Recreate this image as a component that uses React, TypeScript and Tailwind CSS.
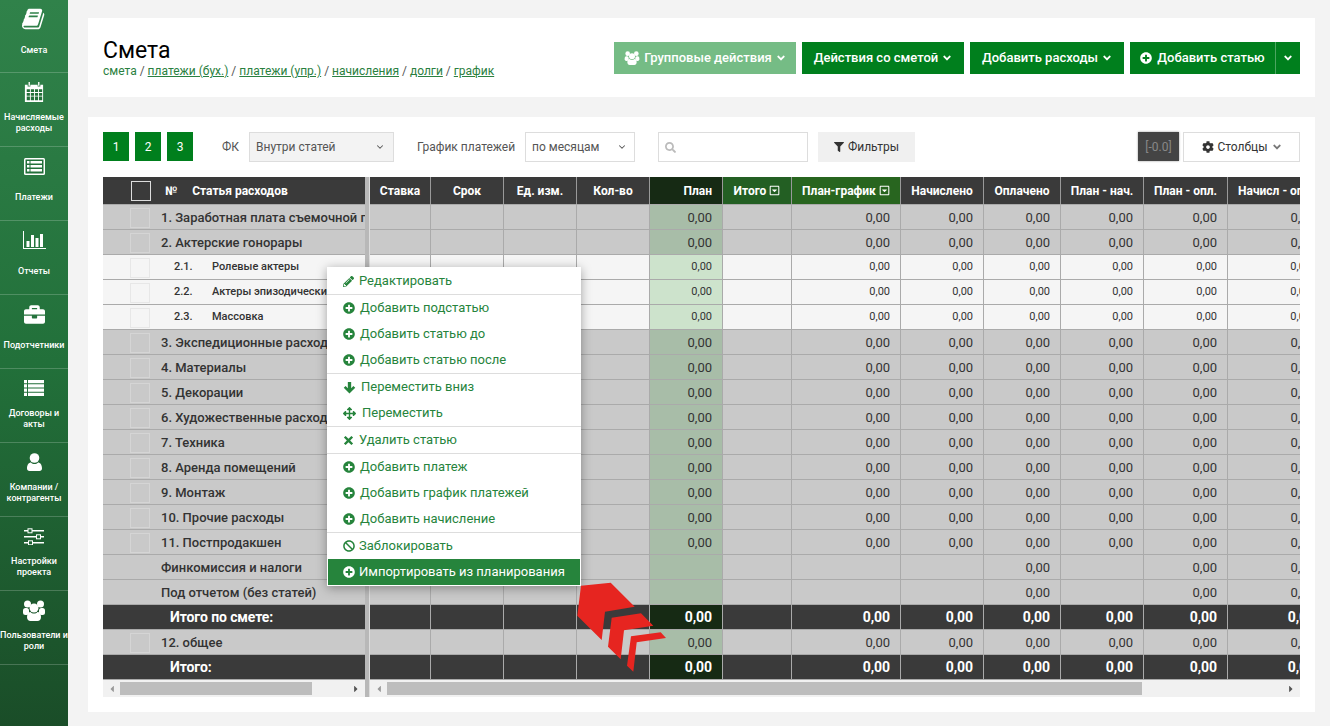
import { ChevronDown } from "lucide-react";
import {
  FaAngleDown,
  FaArrowsAlt,
  FaBan,
  FaBriefcase,
  FaCaretLeft,
  FaCaretRight,
  FaCog,
  FaFilter,
  FaPencilAlt,
  FaPlusCircle,
  FaRegCaretSquareDown,
  FaSearch,
} from "react-icons/fa";

const BookIcon = () => (
  <svg viewBox="0 0 1792 1792" className="h-[24px] w-[24px] fill-white">
    <path d="M1639 478q40 57 18 129l-275 906q-19 64-76.5 107.5t-122.5 43.5h-923q-77 0-148.5-53.5t-99.5-131.5q-24-67-2-127 0-4 3-27t4-37q1-8-3-21.5t-3-19.5q2-11 8-21t16.5-23.5 16.5-23.5q23-38 45-91.5t30-91.5q3-10 .5-30t-.5-28q3-11 17-28t17-23q21-36 42-92t25-90q1-9-2.5-32t.5-28q4-13 22-30.5t22-22.5q19-26 42.5-84.5t27.5-96.5q1-8-3-25.5t-2-26.5q2-8 9-18t18-23 17-21q8-12 16.5-30.5t15-35 16-36 19.5-32 26.5-23.5 36-11.5 47.5 5.5l-1 3q38-9 51-9h761q74 0 114 56t18 130l-274 906q-36 119-71.5 153.5t-128.5 34.5h-869q-27 0-38 15-11 16-1 43 24 70 144 70h923q29 0 56-15.5t35-41.5l300-987q7-22 5-57 38 15 59 43zm-1064 2q-4 13 2 22.5t20 9.5h608q13 0 25.5-9.5t16.5-22.5l21-64q4-13-2-22.5t-20-9.5h-608q-13 0-25.5 9.5t-16.5 22.5zm-83 256q-4 13 2 22.5t20 9.5h608q13 0 25.5-9.5t16.5-22.5l21-64q4-13-2-22.5t-20-9.5h-608q-13 0-25.5 9.5t-16.5 22.5z" />
  </svg>
);

const CalendarIcon = () => (
  <svg viewBox="0 0 22 24" className="h-[22px] w-[20px]">
    <path fill="#fff" d="M1 4h3v2h3V4h8v2h3V4h3v19H1z" />
    <path fill="#fff" d="M5 1h1.500v4H5zM15.500 1H17v4h-1.500z" />
    <g fill="#24713a">
      <path d="M3 9h3.500v3H3zM7.500 9H11v3H7.500zM12 9h3.500v3H12zM16.500 9H20v3h-3.500z" />
      <path d="M3 13h3.500v3H3zM7.500 13H11v3H7.500zM12 13h3.500v3H12zM16.500 13H20v3h-3.500z" />
      <path d="M3 17h3.500v4H3zM7.500 17H11v4H7.500zM12 17h3.500v4H12zM16.500 17H20v4h-3.500z" />
    </g>
  </svg>
);

const ListAltIcon = () => (
  <svg viewBox="0 0 21 17" className="h-[17px] w-[21px]">
    <rect width="21" height="17" rx="1.500" fill="#fff" />
    <rect x="1.500" y="1.500" width="18" height="14" fill="#22703a" />
    <path fill="#fff" d="M3 3h2.500v2.500H3zM6.500 3H18v2.500H6.500zM3 7h2.500v2.500H3zM6.500 7H18v2.500H6.500zM3 11h2.500v2.500H3zM6.500 11H18v2.500H6.500z" />
  </svg>
);

const ChartIcon = () => (
  <svg viewBox="0 0 23 18" className="h-[18px] w-[23px] fill-white">
    <path d="M0 0h1v17h22v1H0z" />
    <path d="M3.500 10h3v6h-3zM8 4h3v12H8zM12.500 7h3v9h-3zM17 3h3v13h-3z" />
  </svg>
);

const RowsIcon = () => (
  <svg viewBox="0 0 20 16" className="h-[16px] w-[20px] fill-white">
    <path d="M0 0h3v3.200H0zM4 0h16v3.200H4zM0 4.300h3v3.200H0zM4 4.300h16v3.200H4zM0 8.600h3v3.200H0zM4 8.600h16v3.200H4zM0 12.800h3V16H0zM4 12.800h16V16H4z" />
  </svg>
);

const UserIcon = () => (
  <svg viewBox="0 0 15 18" className="h-[18px] w-[15px] fill-white">
    <circle cx="7.500" cy="5" r="4.800" />
    <path d="M0 15.500C0 11.500 2 9.500 4 9.500c1 1 2 1.500 3.500 1.500s2.500-.5 3.500-1.500c2 0 4 2 4 6 0 1.500-1 2.500-2.500 2.500h-10C1 18 0 17 0 15.500z" />
  </svg>
);

const SlidersIcon = () => (
  <svg viewBox="0 0 20 17" className="h-[17px] w-[20px]">
    <path fill="#fff" d="M0 2h20v1.600H0zM0 8h20v1.600H0zM0 14h20v1.600H0z" />
    <g fill="#1f6534" stroke="#fff" strokeWidth="1">
      <rect x="4" y="0.800" width="4" height="4" />
      <rect x="12.500" y="6.800" width="4" height="4" />
      <rect x="4.500" y="12.800" width="4" height="4" />
    </g>
  </svg>
);

const UsersIcon = ({ className }: { className: string }) => (
  <svg viewBox="0 0 22 21" className={`fill-current ${className}`}>
    <circle cx="4.500" cy="4" r="3.500" />
    <circle cx="17.500" cy="4" r="3.500" />
    <circle cx="11" cy="8" r="4.500" />
    <rect x="0" y="8" width="6" height="7" rx="2.500" />
    <rect x="16" y="8" width="6" height="7" rx="2.500" />
    <path d="M4 17c0-3.500 2-5 3.500-5 1 1 2 1.500 3.500 1.500s2.500-.5 3.500-1.500c1.500 0 3.500 1.500 3.500 5 0 2.500-1.500 4-3.500 4h-7C5.500 21 4 19.500 4 17z" />
  </svg>
);

// the thin arrow and cross from the icon pack look too light next to the reference
const ArrowDownIcon = () => (
  <svg viewBox="0 0 14 14" className="h-[13px] w-[13px] fill-current">
    <path d="M7 13.500.8 7.300l2-2 2.400 2.400V1h3.600v6.700l2.400-2.400 2 2z" />
  </svg>
);

const CrossIcon = () => (
  <svg viewBox="0 0 12 12" className="h-[11px] w-[11px] fill-current">
    <path d="M2.800 1 6 4.200 9.200 1 11 2.800 7.800 6 11 9.200 9.200 11 6 7.800 2.800 11 1 9.200 4.200 6 1 2.800z" />
  </svg>
);

const nav = [
  { icon: <BookIcon />, label: ["Смета"] },
  { icon: <CalendarIcon />, label: ["Начисляемые", "расходы"] },
  { icon: <ListAltIcon />, label: ["Платежи"] },
  { icon: <ChartIcon />, label: ["Отчеты"] },
  { icon: <FaBriefcase className="h-[21px] w-[21px]" />, label: ["Подотчетники"] },
  { icon: <RowsIcon />, label: ["Договоры и", "акты"] },
  { icon: <UserIcon />, label: ["Компании /", "контрагенты"] },
  { icon: <SlidersIcon />, label: ["Настройки", "проекта"] },
  { icon: <UsersIcon className="h-[21px] w-[22px]" />, label: ["Пользователи и", "роли"] },
];

const columns = [
  { label: "Ставка", cls: "justify-center bg-[#3a3a3a]" },
  { label: "Срок", cls: "justify-center bg-[#3a3a3a]" },
  { label: "Ед. изм.", cls: "justify-center bg-[#3a3a3a]" },
  { label: "Кол-во", cls: "justify-center bg-[#3a3a3a]" },
  { label: "План", cls: "justify-end pr-[10px] bg-[#162a14]" },
  { label: "Итого", cls: "justify-center bg-[#235f23]", caret: true },
  { label: "План-график", cls: "justify-center bg-[#28651f]", caret: true },
  { label: "Начислено", cls: "justify-center bg-[#3a3a3a]" },
  { label: "Оплачено", cls: "justify-center bg-[#3a3a3a]" },
  { label: "План - нач.", cls: "justify-center bg-[#3a3a3a]" },
  { label: "План - опл.", cls: "justify-center bg-[#3a3a3a]" },
  { label: "Начисл - опл.", cls: "justify-start pl-[10px] bg-[#3a3a3a]" },
];

type Kind = "main" | "sub" | "other" | "total";
type Row = { num?: string; name: string; kind: Kind };

const rows: Row[] = [
  { name: "1. Заработная плата съемочной группы", kind: "main" },
  { name: "2. Актерские гонорары", kind: "main" },
  { num: "2.1.", name: "Ролевые актеры", kind: "sub" },
  { num: "2.2.", name: "Актеры эпизодические", kind: "sub" },
  { num: "2.3.", name: "Массовка", kind: "sub" },
  { name: "3. Экспедиционные расходы", kind: "main" },
  { name: "4. Материалы", kind: "main" },
  { name: "5. Декорации", kind: "main" },
  { name: "6. Художественные расходы", kind: "main" },
  { name: "7. Техника", kind: "main" },
  { name: "8. Аренда помещений", kind: "main" },
  { name: "9. Монтаж", kind: "main" },
  { name: "10. Прочие расходы", kind: "main" },
  { name: "11. Постпродакшен", kind: "main" },
  { name: "Финкомиссия и налоги", kind: "other" },
  { name: "Под отчетом (без статей)", kind: "other" },
  { name: "Итого по смете:", kind: "total" },
  { name: "12. общее", kind: "main" },
  { name: "Итого:", kind: "total" },
];

const rowColors: Record<Kind, string> = {
  main: "bg-[#c9c9c9] text-[13px] text-[#333]",
  other: "bg-[#c9c9c9] text-[13px] text-[#333]",
  sub: "bg-[#f5f5f5] text-[11px] text-[#333]",
  total: "bg-[#3a3a3a] text-[14px] font-bold tracking-[-0.1px] text-white",
};

const planColors: Record<Kind, string> = {
  main: "bg-[#a8bda8]",
  other: "bg-[#a8bda8]",
  sub: "bg-[#cde3cc]",
  total: "bg-[#162a14]",
};

const gridCols = "grid w-[948px] grid-cols-[61px_73px_73px_73px_73px_69px_109px_83px_77px_83px_84px_110px]";

function cellValue(kind: Kind, col: number) {
  // 0..3 are always empty, Итого (5) too
  if (col < 4 || col === 5) return "";
  if (kind === "other") return [8, 10, 11].includes(col) ? "0,00" : "";
  return "0,00";
}

const LeftRow = ({ row }: { row: Row }) => {
  if (row.kind === "total") {
    return (
      <div className="flex h-[25px] items-center border-b border-[#aaa] bg-[#3a3a3a] pl-[67px] pt-px text-[14px] font-bold tracking-[-0.1px] text-white">
        {row.name}
      </div>
    );
  }
  return (
    <div className={`flex h-[25px] items-center overflow-hidden whitespace-nowrap border-b border-[#aaa] pl-[27px] pt-px font-medium ${rowColors[row.kind]}`}>
      {row.kind === "other" ? (
        <span className="w-[20px] shrink-0" />
      ) : (
        <span className="h-[20px] w-[20px] shrink-0 border border-[#ddd]/60" />
      )}
      {row.num ? (
        <>
          <span className="ml-[24px] w-[38px] shrink-0">{row.num}</span>
          <span>{row.name}</span>
        </>
      ) : (
        <span className="ml-[11px]">{row.name}</span>
      )}
    </div>
  );
};

const RightRow = ({ row }: { row: Row }) => (
  <div className={`${gridCols} h-[25px] border-b border-[#aaa] ${rowColors[row.kind]}`}>
    {columns.map((c, i) => (
      <div
        key={c.label}
        className={`flex items-center justify-end border-r border-[#aaa] pr-[10px] pt-px ${i === 4 ? planColors[row.kind] : ""} ${i === 11 ? (row.kind === "sub" ? "border-r-0 pr-[27px]" : "border-r-0 pr-[23px]") : ""}`}
      >
        {cellValue(row.kind, i)}
      </div>
    ))}
  </div>
);

const menu = [
  [{ icon: <FaPencilAlt className="h-[11px] w-[11px]" />, text: "Редактировать", gap: "ml-[5px]" }],
  [
    { icon: <FaPlusCircle className="h-[12px] w-[12px]" />, text: "Добавить подстатью", gap: "ml-[5px]" },
    { icon: <FaPlusCircle className="h-[12px] w-[12px]" />, text: "Добавить статью до", gap: "ml-[5px]" },
    { icon: <FaPlusCircle className="h-[12px] w-[12px]" />, text: "Добавить статью после", gap: "ml-[5px]" },
  ],
  [
    { icon: <ArrowDownIcon />, text: "Переместить вниз", gap: "ml-[5px]" },
    { icon: <FaArrowsAlt className="h-[13px] w-[13px]" />, text: "Переместить", gap: "ml-[6px]" },
  ],
  [{ icon: <CrossIcon />, text: "Удалить статью", gap: "ml-[5px]" }],
  [
    { icon: <FaPlusCircle className="h-[12px] w-[12px]" />, text: "Добавить платеж", gap: "ml-[5px]" },
    { icon: <FaPlusCircle className="h-[12px] w-[12px]" />, text: "Добавить график платежей", gap: "ml-[5px]" },
    { icon: <FaPlusCircle className="h-[12px] w-[12px]" />, text: "Добавить начисление", gap: "ml-[5px]" },
  ],
];

const ContextMenu = () => (
  <div className="absolute left-[239px] top-[150px] w-[254px] bg-white pt-px text-[13px] text-[#26843c] shadow-[0_2px_10px_rgba(0,0,0,0.35)]">
    {menu.map((group) => (
      <div key={group[0].text} className="border-b border-[#ddd]">
        {group.map((item) => (
          <div key={item.text} className="flex h-[26px] items-center pl-[16px]">
            {item.icon}
            <span className={item.gap}>{item.text}</span>
          </div>
        ))}
      </div>
    ))}
    <div className="flex h-[26px] items-center pl-[16px]">
      <FaBan className="h-[12px] w-[12px]" />
      <span className="ml-[4px]">Заблокировать</span>
    </div>
    <div className="mx-px mb-px flex h-[26px] items-center bg-[#26843c] pl-[15px] text-white">
      <FaPlusCircle className="h-[12px] w-[12px]" />
      <span className="ml-[4px]">Импортировать из планирования</span>
    </div>
  </div>
);

const greenBtn = "flex h-[32px] items-center justify-center bg-[#007f1d] text-[13px] font-medium text-white";

const Scrollbar = ({ thumb }: { thumb: string }) => (
  <div className="flex h-[17px] items-center bg-[#f1f1f1] text-[#555]">
    <FaCaretLeft className="ml-[5px] h-[10px] w-[8px] shrink-0 text-[#999]" />
    <div className={`ml-[4px] h-[13px] bg-[#bdbdbd] ${thumb}`} />
    <FaCaretRight className="ml-auto mr-[5px] h-[10px] w-[8px] shrink-0" />
  </div>
);

export default function App() {
  return (
    <div className="flex h-[726px] w-[1330px] overflow-hidden bg-[#f3f3f3] font-['Roboto',sans-serif]">
      <aside className="h-full w-[68px] shrink-0 bg-gradient-to-b from-[#30824a] via-[#22703a] to-[#1a4d28] text-white">
        {nav.map((item) => (
          <div key={item.label[0]} className="flex h-[74px] flex-col items-center border-b border-white/20 first:h-[73px]">
            <div className="flex h-[38px] items-center justify-center">{item.icon}</div>
            <div className="flex h-[24px] flex-col justify-center whitespace-nowrap text-center text-[9px] font-medium leading-[11px]">
              {item.label.map((l) => (
                <span key={l}>{l}</span>
              ))}
            </div>
          </div>
        ))}
      </aside>

      <main className="ml-[20px] mr-[15px] flex-1 pt-[18px]">
        <header className="flex h-[79px] items-center justify-between bg-white px-[15px]">
          <div className="pt-[2px]">
            <h1 className="text-[23px] leading-[26px] text-black">Смета</h1>
            <div className="text-[12px] leading-[15px] text-[#555]">
              <span className="text-[#2a8040]">смета</span> /{" "}
              <a className="text-[#2a8040] underline">платежи (бух.)</a> /{" "}
              <a className="text-[#2a8040] underline">платежи (упр.)</a> /{" "}
              <a className="text-[#2a8040] underline">начисления</a> /{" "}
              <a className="text-[#2a8040] underline">долги</a> /{" "}
              <a className="text-[#2a8040] underline">график</a>
            </div>
          </div>
          <div className="flex">
            <button className={`${greenBtn} w-[182px] gap-[4px] !bg-[#75bc85]`}>
              <UsersIcon className="h-[14px] w-[16px]" />
              Групповые действия
              <FaAngleDown className="h-[12px] w-[10px]" />
            </button>
            <button className={`${greenBtn} ml-[6px] w-[162px] gap-[4px]`}>
              Действия со сметой
              <FaAngleDown className="h-[12px] w-[10px]" />
            </button>
            <button className={`${greenBtn} ml-[6px] w-[154px] gap-[4px]`}>
              Добавить расходы
              <FaAngleDown className="h-[12px] w-[10px]" />
            </button>
            <button className={`${greenBtn} ml-[6px] w-[146px] gap-[5px] border-r border-white/30`}>
              <FaPlusCircle className="h-[12px] w-[12px]" />
              Добавить статью
            </button>
            <button className={`${greenBtn} w-[24px]`}>
              <FaAngleDown className="h-[12px] w-[10px]" />
            </button>
          </div>
        </header>

        <section className="relative mt-[20px] h-[595px] bg-white px-[15px] pt-[15px]">
          <div className="flex h-[30px] items-start text-[12px]">
            {["1", "2", "3"].map((n) => (
              <div key={n} className="mr-[6px] flex h-[29px] w-[26px] items-center justify-center bg-[#007f1d] text-white">
                {n}
              </div>
            ))}
            <span className="ml-[23px] w-[17px] leading-[30px] text-[#555]">ФК</span>
            <div className="ml-[10px] flex h-[30px] w-[145px] items-center justify-between border border-[#ddd] bg-[#f3f3f3] pl-[6px] pr-[8px] text-[#555]">
              Внутри статей
              <ChevronDown className="h-[10px] w-[10px]" strokeWidth={2.5} />
            </div>
            <span className="ml-[23px] w-[98px] whitespace-nowrap leading-[30px] text-[#555]">График платежей</span>
            <div className="ml-[10px] flex h-[30px] w-[110px] items-center justify-between border border-[#ddd] bg-white pl-[6px] pr-[7px] text-[#555]">
              по месяцам
              <ChevronDown className="h-[10px] w-[10px]" strokeWidth={2.5} />
            </div>
            <div className="ml-[23px] flex h-[30px] w-[150px] items-center border border-[#ddd] pl-[6px]">
              <FaSearch className="h-[11px] w-[11px] text-[#bbb]" />
            </div>
            <div className="ml-[10px] flex h-[30px] w-[97px] items-center justify-center gap-[4px] bg-[#f0f0f0] text-[#333]">
              <FaFilter className="h-[10px] w-[10px]" />
              Фильтры
            </div>
            <div className="ml-auto flex h-[29px] w-[41px] items-center justify-center bg-[#444] text-[#888] shadow-[0_0_2px_rgba(0,0,0,0.4)]">
              [-0.0]
            </div>
            <div className="ml-[4px] flex h-[30px] w-[117px] items-center justify-center gap-[4px] border border-[#ddd] text-[#333]">
              <FaCog className="h-[12px] w-[12px]" />
              Столбцы
              <FaAngleDown className="h-[12px] w-[10px] text-[#777]" />
            </div>
          </div>

          <div className="mt-[15px] flex w-[1197px]">
            <div className="w-[262px] shrink-0">
              <div className="flex h-[28px] items-center border-b border-[#aaa] bg-[#3a3a3a] pl-[28px] text-[12px] font-bold text-white">
                <span className="h-[20px] w-[20px] border border-[#ddd]" />
                <span className="ml-[14px]">№</span>
                <span className="ml-[15px]">Статья расходов</span>
              </div>
              {rows.map((r) => (
                <LeftRow key={r.name} row={r} />
              ))}
              <Scrollbar thumb="w-[192px]" />
            </div>
            <div className="w-[5px] shrink-0 border-r border-[#ddd] bg-[#b8b8b8]" />
            <div className="min-w-0 flex-1 overflow-hidden">
              <div className={`${gridCols} h-[28px] border-b border-[#aaa] text-[12px] font-bold text-white`}>
                {columns.map((c) => (
                  <div key={c.label} className={`flex items-center gap-[3px] whitespace-nowrap border-r border-[#999] ${c.cls}`}>
                    {c.label}
                    {c.caret && <FaRegCaretSquareDown className="h-[11px] w-[11px]" />}
                  </div>
                ))}
              </div>
              {rows.map((r) => (
                <RightRow key={r.name} row={r} />
              ))}
              <Scrollbar thumb="w-[755px]" />
            </div>
          </div>

          <ContextMenu />

          {/* red arrow pointing at the import item */}
          <svg className="absolute left-[480px] top-[460px] h-[100px] w-[110px] fill-[#e62520]" viewBox="480 577 110 100">
            <polygon points="493,585.700 522.700,582.700 546.700,606.700 517,611.700 513.700,640 489.300,615.700" />
            <polygon points="523.700,617.700 553,613.300 565.300,625.700 536,630.300 532.700,659.300 520,646.700" />
            <polygon points="543,636.300 572.700,632.300 578,638 548.700,642.300 545.300,671.700 539,665.700" />
          </svg>
        </section>
      </main>
    </div>
  );
}
